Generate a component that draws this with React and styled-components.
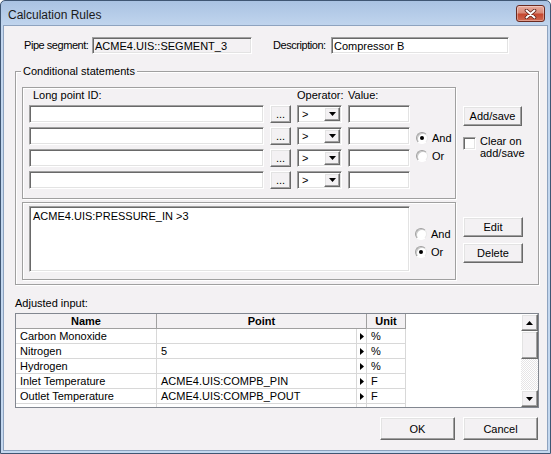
import React from 'react';
import styled, { createGlobalStyle, css } from 'styled-components';

const BG = '#f3f1f3';

const Global = createGlobalStyle`
  html, body { margin: 0; padding: 0; background: #ffffff; }
  body { font-family: "Liberation Sans", Arial, sans-serif; font-size: 11px; color: #000; }
  * { box-sizing: border-box; }
`;

const sunken = css`
  border: 1px solid;
  border-color: #a0a0a0 #ffffff #ffffff #a0a0a0;
  box-shadow: inset 1px 1px 0 #696969, inset -1px -1px 0 #e3e3e3;
`;

const raised = css`
  border: 1px solid;
  border-color: #ffffff #696969 #696969 #ffffff;
  box-shadow: inset -1px -1px 0 #a0a0a0, inset 1px 1px 0 #e3e3e3;
  background: ${BG};
`;

const Window = styled.div`
  width: 551px;
  height: 454px;
  display: flex;
  flex-direction: column;
  border: 1px solid #3f5673;
  border-radius: 5px 5px 0 0;
  background: linear-gradient(to bottom, #a9c2e2 0px, #c2d6ee 26px, #c4d8ef 100%);
  padding: 0 3px 3px 3px;
`;

const TitleBar = styled.div`
  height: 25px;
  flex: none;
  display: flex;
  align-items: center;
  justify-content: space-between;
  padding: 0 2px 0 4px;
`;

const Title = styled.span`
  font-size: 12px;
  color: #1a1a1a;
  padding-top: 2px;
`;

const CloseButton = styled.div`
  width: 29px;
  height: 17px;
  border: 1px solid #6a2a20;
  border-radius: 3px;
  background: linear-gradient(to bottom, #e8ab9e 0%, #d98a78 45%, #c5472f 55%, #d06a52 100%);
  box-shadow: inset 0 0 0 1px rgba(255, 255, 255, 0.35);
  display: flex;
  align-items: center;
  justify-content: center;
`;

const Client = styled.div`
  flex: 1;
  background: ${BG};
  box-shadow: 0 0 0 1px #8ea3bf;
  padding: 11px 8px 0 11px;
  display: flex;
  flex-direction: column;
`;

const TopRow = styled.div`
  display: grid;
  grid-template-columns: 68px 160px 21px 58px 178px;
  height: 17px;
  margin-left: 9px;
  align-items: center;
`;

const Label = styled.span`
  white-space: nowrap;
  line-height: 13px;
  padding-left: ${p => p.$indent || 0}px;
  letter-spacing: ${p => (p.$tight ? '-0.45px' : 'normal')};
`;

const TextBox = styled.div`
  ${sunken};
  height: ${p => p.$h || 18}px;
  background: ${p => (p.$readOnly ? BG : '#ffffff')};
  padding: ${p => (p.$multi ? '3px 3px' : '0 2px')};
  display: flex;
  align-items: ${p => (p.$multi ? 'flex-start' : 'center')};
  white-space: nowrap;
  overflow: hidden;
  grid-column: ${p => p.$col || 'auto'};
`;

const Group = styled.div`
  position: relative;
  margin-top: 17px;
  height: 214px;
  border: 1px solid #a0a0a0;
  box-shadow: inset 1px 1px 0 #ffffff, 1px 1px 0 #ffffff;
  padding: 15px 0 0 6px;
  display: grid;
  grid-template-columns: 434px 1fr;
  grid-template-rows: 112px 78px;
  column-gap: 7px;
  row-gap: 3px;
`;

const Legend = styled.span`
  position: absolute;
  top: -7px;
  left: 5px;
  padding: 0 2px;
  background: ${BG};
  line-height: 13px;
`;

const Panel = styled.div`
  border: 1px solid #a0a0a0;
  box-shadow: inset 1px 1px 0 #ffffff, 1px 1px 0 #ffffff;
`;

const CondPanel = styled(Panel)`
  display: grid;
  grid-template-columns: 235px 21px 45px 62px 1fr;
  grid-template-rows: 12px repeat(4, 18px);
  column-gap: 6px;
  row-gap: 4px;
  padding: 1px 6px 0 6px;
  align-content: start;
  align-items: center;
`;

const ListPanel = styled(Panel)`
  display: grid;
  grid-template-columns: 381px 1fr;
  column-gap: 5px;
  padding: 3px 6px 0 6px;
  align-content: start;
`;

const RadioGroup = styled.div`
  display: flex;
  flex-direction: column;
  justify-content: center;
  gap: 5px;
  grid-column: ${p => p.$col || 'auto'};
  grid-row: ${p => p.$row || 'auto'};
  padding-top: ${p => p.$pt || 0}px;
  height: 100%;
`;

const RadioItem = styled.label`
  display: flex;
  align-items: center;
  gap: 4px;
  height: 13px;
`;

const RadioCircle = styled.span`
  position: relative;
  flex: none;
  width: 12px;
  height: 12px;
  border-radius: 50%;
  background: #ffffff;
  border: 1px solid;
  border-color: #a0a0a0 #e8e8e8 #ffffff #a0a0a0;
  box-shadow: inset 1px 1px 0 #c8c8c8;
  ${p =>
    p.$checked &&
    css`
      &::after {
        content: '';
        position: absolute;
        left: 3px;
        top: 3px;
        width: 4px;
        height: 4px;
        border-radius: 50%;
        background: #000000;
      }
    `}
`;

const SideCell = styled.div`
  display: flex;
  flex-direction: column;
  align-items: flex-start;
  padding-top: ${p => p.$top}px;
  gap: ${p => p.$gap || 0}px;
`;

const Button = styled.button`
  ${raised};
  width: ${p => p.$w}px;
  height: ${p => p.$h}px;
  font: inherit;
  color: #000000;
  padding: 0;
  display: flex;
  align-items: center;
  justify-content: center;
  flex: none;
`;

const CheckRow = styled.div`
  display: flex;
  gap: 4px;
  margin-top: 11px;
`;

const CheckBox = styled.span`
  ${sunken};
  width: 13px;
  height: 13px;
  background: #ffffff;
  flex: none;
`;

const CheckText = styled.span`
  line-height: 12px;
  margin-top: -2px;
`;

const Combo = styled.div`
  ${sunken};
  background: #ffffff;
  height: 18px;
  display: flex;
  padding: 1px;
`;

const ComboText = styled.span`
  flex: 1;
  padding-left: 3px;
  display: flex;
  align-items: center;
`;

const DropButton = styled.span`
  ${raised};
  width: 16px;
  display: flex;
  align-items: center;
  justify-content: center;
`;

const EllipsisButton = styled(Button)`
  align-items: flex-end;
  padding-bottom: 2px;
`;

const SectionLabel = styled.div`
  margin-top: 12px;
  line-height: 13px;
`;

const TableBox = styled.div`
  margin-top: 3px;
  height: 95px;
  border: 1px solid #828790;
  display: flex;
  background: #ffffff;
`;

const GridArea = styled.div`
  flex: 1;
  overflow: hidden;
`;

const HeaderRow = styled.div`
  display: grid;
  grid-template-columns: 141px 210px 39px;
  height: 15px;
`;

const HeaderCell = styled.div`
  background: ${BG};
  border-right: 1px solid #a0a0a0;
  border-bottom: 1px solid #a0a0a0;
  font-weight: bold;
  text-align: center;
  line-height: 14px;
`;

const DataRow = styled.div`
  display: grid;
  grid-template-columns: 141px 200px 10px 39px;
  height: 15px;
`;

const Cell = styled.div`
  border-right: 1px solid #d8d8d8;
  border-bottom: 1px solid #d8d8d8;
  padding-left: ${p => (p.$arrow ? 0 : 4)}px;
  line-height: 14px;
  white-space: nowrap;
  overflow: hidden;
  display: flex;
  align-items: center;
  justify-content: ${p => (p.$arrow ? 'center' : 'flex-start')};
`;

const ScrollBar = styled.div`
  width: 17px;
  flex: none;
  display: flex;
  flex-direction: column;
`;

const ScrollButton = styled.div`
  ${raised};
  height: ${p => p.$h}px;
  flex: none;
  display: flex;
  align-items: center;
  justify-content: center;
`;

const Track = styled.div`
  flex: 1;
  background: repeating-conic-gradient(#ffffff 0 25%, #e6e4e6 0 50%) 0 0 / 2px 2px;
`;

const Footer = styled.div`
  display: flex;
  justify-content: flex-end;
  gap: 8px;
  margin-top: 9px;
  padding-right: 1px;
`;

const TriDown = () => (
  <svg width="7" height="4" viewBox="0 0 7 4">
    <path d="M0 0h7L3.5 4z" fill="#000" />
  </svg>
);
const TriUp = () => (
  <svg width="7" height="4" viewBox="0 0 7 4">
    <path d="M0 4h7L3.5 0z" fill="#000" />
  </svg>
);
const TriRight = () => (
  <svg width="4" height="7" viewBox="0 0 4 7">
    <path d="M0 0v7l4-3.5z" fill="#000" />
  </svg>
);

const Radio = ({ checked, children }) => (
  <RadioItem>
    <RadioCircle $checked={checked} />
    <span>{children}</span>
  </RadioItem>
);

const rows = [
  ['Carbon Monoxide', '', '%'],
  ['Nitrogen', '5', '%'],
  ['Hydrogen', '', '%'],
  ['Inlet Temperature', 'ACME4.UIS:COMPB_PIN', 'F'],
  ['Outlet Temperature', 'ACME4.UIS:COMPB_POUT', 'F'],
  ['', '', ''],
];

export default function App() {
  return (
    <>
      <Global />
      <Window>
        <TitleBar>
          <Title>Calculation Rules</Title>
          <CloseButton>
            <svg width="13" height="10" viewBox="0 0 13 10">
              <path d="M2.5 1.5l8 7M10.5 1.5l-8 7" stroke="#5a1d14" strokeWidth="3.6" strokeLinecap="round" />
              <path d="M2.5 1.5l8 7M10.5 1.5l-8 7" stroke="#ffffff" strokeWidth="2" strokeLinecap="round" />
            </svg>
          </CloseButton>
        </TitleBar>
        <Client>
          <TopRow>
            <Label $tight>Pipe segment:</Label>
            <TextBox $h={17} $readOnly>ACME4.UIS::SEGMENT_3</TextBox>
            <span />
            <Label $tight>Description:</Label>
            <TextBox $h={17}>Compressor B</TextBox>
          </TopRow>

          <Group>
            <Legend>Conditional statements</Legend>
            <CondPanel>
              <Label $indent={4}>Long point ID:</Label>
              <span />
              <Label>Operator:</Label>
              <Label>Value:</Label>
              <span />
              {[0, 1, 2, 3].map(i => (
                <React.Fragment key={i}>
                  <TextBox $col="1" />
                  <EllipsisButton $w={21} $h={18}>...</EllipsisButton>
                  <Combo>
                    <ComboText>&gt;</ComboText>
                    <DropButton>
                      <TriDown />
                    </DropButton>
                  </Combo>
                  <TextBox />
                  {i === 1 && (
                    <RadioGroup $col="5" $row="3 / 5">
                      <Radio checked>And</Radio>
                      <Radio>Or</Radio>
                    </RadioGroup>
                  )}
                </React.Fragment>
              ))}
            </CondPanel>
            <SideCell $top={19}>
              <Button $w={59} $h={20}>Add/save</Button>
              <CheckRow>
                <CheckBox />
                <CheckText>
                  Clear on
                  <br />
                  add/save
                </CheckText>
              </CheckRow>
            </SideCell>

            <ListPanel>
              <TextBox $h={66} $multi>ACME4.UIS:PRESSURE_IN &gt;3</TextBox>
              <RadioGroup $pt={8}>
                <Radio>And</Radio>
                <Radio checked>Or</Radio>
              </RadioGroup>
            </ListPanel>
            <SideCell $top={15} $gap={6}>
              <Button $w={60} $h={20}>Edit</Button>
              <Button $w={60} $h={20}>Delete</Button>
            </SideCell>
          </Group>

          <SectionLabel>Adjusted input:</SectionLabel>
          <TableBox>
            <GridArea>
              <HeaderRow>
                <HeaderCell>Name</HeaderCell>
                <HeaderCell>Point</HeaderCell>
                <HeaderCell>Unit</HeaderCell>
              </HeaderRow>
              {rows.map((r, i) => (
                <DataRow key={i}>
                  <Cell>{r[0]}</Cell>
                  <Cell>{r[1]}</Cell>
                  <Cell $arrow>
                    <TriRight />
                  </Cell>
                  <Cell>{r[2]}</Cell>
                </DataRow>
              ))}
            </GridArea>
            <ScrollBar>
              <ScrollButton $h={17}>
                <TriUp />
              </ScrollButton>
              <ScrollButton $h={28} />
              <Track />
              <ScrollButton $h={17}>
                <TriDown />
              </ScrollButton>
            </ScrollBar>
          </TableBox>

          <Footer>
            <Button $w={75} $h={23}>OK</Button>
            <Button $w={75} $h={23}>Cancel</Button>
          </Footer>
        </Client>
      </Window>
    </>
  );
}
